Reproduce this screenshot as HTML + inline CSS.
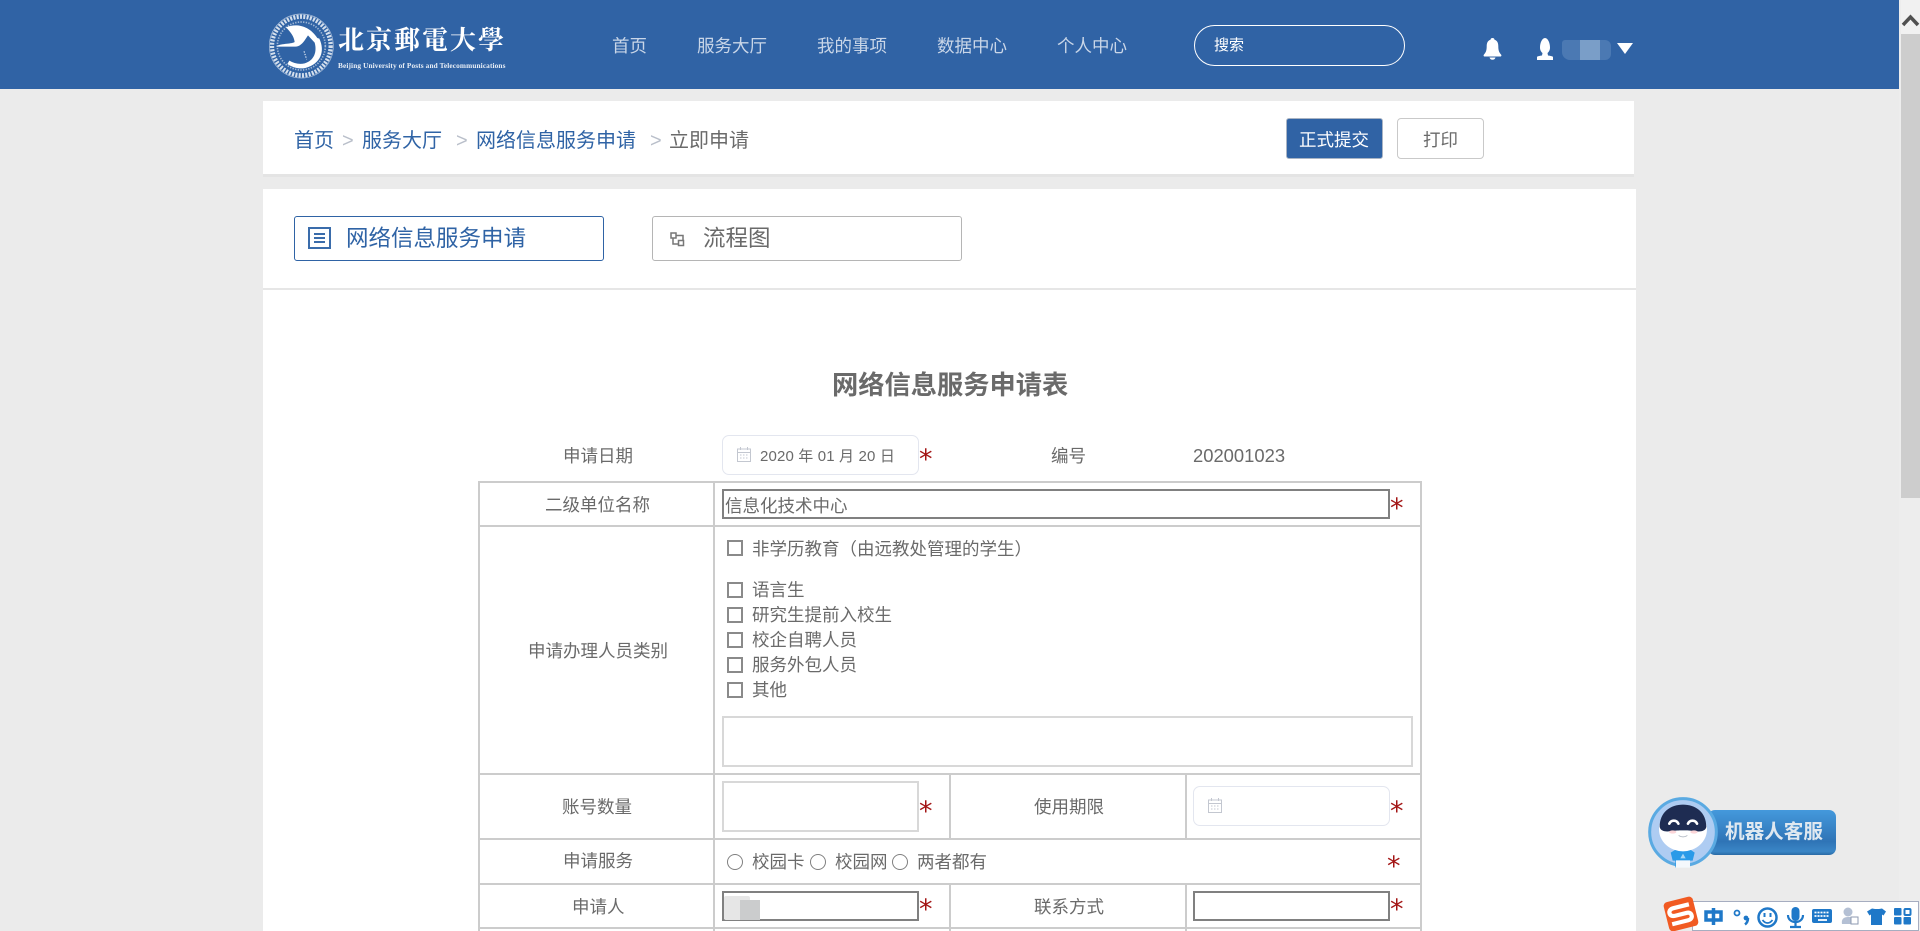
<!DOCTYPE html>
<html lang="zh-CN"><head><meta charset="utf-8"><title>网络信息服务申请</title>
<style>
html,body{margin:0;padding:0;width:1920px;height:931px;overflow:hidden;background:#ebebeb}
body{position:relative;font-family:"Liberation Sans","Noto Sans CJK SC",sans-serif;color:#6a6a6a;font-size:17.5px}
div,span.t{position:absolute;box-sizing:border-box}
.t{white-space:nowrap;line-height:24px;height:24px}
.a{position:absolute;font-family:"DejaVu Sans",sans-serif;color:#a31515;font-size:27px;line-height:30px;height:30px;width:16px}
.nav{color:#c9d6e8;top:34px}
.b{color:#2f63a5;font-size:20px;top:129px}
.g{color:#b9bfca;font-size:20px;top:129px;font-family:"Liberation Sans",sans-serif}
.h{background:#ccc}
.cb{width:16px;height:16px;border:2px solid #8a8a8a;background:#fff;left:727px}
.rd{width:16px;height:16px;border:1.5px solid #808080;border-radius:50%;background:#fff}
.in{border:2px solid #808080;background:#fff}
.in2{border:2px solid #d8d8d8;background:#fff}
.dt{border:1.5px solid #e3e6ef;border-radius:7px;background:#fff}
svg{position:absolute;overflow:visible}
</style></head><body>
<div style="left:0;top:0;width:1899px;height:89px;background:#3063a5"></div>
<!-- scrollbar -->
<div style="left:1899px;top:0;width:21px;height:931px;background:#ededed"></div>
<div style="left:1901px;top:0;width:19px;height:34px;background:#f1f1f1"></div>
<div style="left:1901px;top:34px;width:19px;height:464px;background:#cdcdcd"></div>
<svg style="left:1901px;top:12px" width="19" height="18"><path d="M2 13 L9.500 5 L17 13" fill="none" stroke="#505050" stroke-width="3.500"/></svg>

<!-- logo -->
<svg style="left:262px;top:8px" width="80" height="76" viewBox="0 0 240 228">
<circle cx="118" cy="114" r="88" fill="none" stroke="#fff" stroke-width="13" stroke-dasharray="6 4" opacity=".8"/>
<circle cx="118" cy="114" r="72" fill="none" stroke="#fff" stroke-width="5" stroke-dasharray="4 4" opacity=".55"/>
<circle cx="118" cy="114" r="96" fill="none" stroke="#fff" stroke-width="2" opacity=".6"/>
<path d="M44 114 C60 106 90 108 98 102 C96 85 86 72 72 58 C100 46 140 50 166 90 L172 92 C190 130 176 168 130 180 C112 184 90 178 76 168 L82 158 C96 166 112 170 128 166 C156 158 166 132 158 104 L138 82 L130 94 C122 106 112 116 100 116 L44 116 Z" fill="#fff"/>
<path d="M126 130l8 24" stroke="#fff" stroke-width="3" stroke-dasharray="4 4"/>
</svg>
<span class="t" style="left:338px;top:21px;height:36px;line-height:36px;font-family:'Noto Serif CJK SC',serif;font-weight:700;font-size:26px;color:#fff;letter-spacing:2px">北京郵電大學</span>
<span class="t" style="left:338px;top:60px;height:12px;line-height:12px;font-family:'Liberation Serif',serif;font-size:7.3px;font-weight:bold;color:#e8eef6;letter-spacing:.12px">Beijing University of Posts and Telecommunications</span>

<span class="t nav" style="left:612px">首页</span>
<span class="t nav" style="left:697px">服务大厅</span>
<span class="t nav" style="left:817px">我的事项</span>
<span class="t nav" style="left:937px">数据中心</span>
<span class="t nav" style="left:1057px">个人中心</span>

<div style="left:1194px;top:25px;width:211px;height:41px;border:1.5px solid #fff;border-radius:21px"></div>
<span class="t" style="left:1214px;top:34px;color:#fff;font-size:15px">搜索</span>
<svg style="left:1482px;top:38px" width="21" height="22" viewBox="0 0 21 22"><path d="M10.500 0c1.300 0 2 .8 2 1.800 3 .9 3.800 3.500 3.800 6.500 0 4 .7 6 2.700 8.200.8.900.4 2-.8 2H2.800c-1.200 0-1.600-1.100-.8-2 2-2.200 2.700-4.200 2.700-8.200 0-3 .8-5.600 3.800-6.500 0-1 .7-1.800 2-1.800z" fill="#fff"/><path d="M7.500 19.500h6c-.5 1.500-1.500 2.300-3 2.300s-2.500-.8-3-2.300z" fill="#fff"/></svg>
<svg style="left:1536px;top:38px" width="18" height="22" viewBox="0 0 18 22"><path d="M9 0c3 0 5 5 5 9.500 0 2.700-1.200 4.500-2.500 5.500l.5 2.500c2.500.4 5 .8 5 1.500V22H1v-3c0-.7 2.500-1.100 5-1.500l.5-2.500C5.200 14 4 12.200 4 9.500 4 5 6 0 9 0z" fill="#fff"/></svg>
<div style="left:1562px;top:40px;width:49px;height:20px;background:#4b79b3;border-radius:3px 6px 6px 8px"></div>
<div style="left:1580px;top:40px;width:20px;height:20px;background:#7a9ec8"></div>
<svg style="left:1617px;top:43px" width="16" height="11"><path d="M0 0H16L8 11Z" fill="#fff"/></svg>

<!-- breadcrumb panel -->
<div style="left:263px;top:101px;width:1371px;height:73px;background:#fff;box-shadow:0 3px 0 #e4e4e4"></div>
<span class="t b" style="left:294px">首页</span>
<span class="t g" style="left:342px">&gt;</span>
<span class="t b" style="left:362px">服务大厅</span>
<span class="t g" style="left:456px">&gt;</span>
<span class="t b" style="left:476px">网络信息服务申请</span>
<span class="t g" style="left:650px">&gt;</span>
<span class="t" style="left:669px;top:129px;font-size:20px">立即申请</span>
<div style="left:1286px;top:118px;width:97px;height:41px;background:#3063a5;border:1.5px solid #a9b4c4;border-radius:3px"></div>
<span class="t" style="left:1299px;top:128px;color:#fff">正式提交</span>
<div style="left:1397px;top:118px;width:87px;height:41px;background:#fff;border:1.5px solid #c9c9c9;border-radius:4px"></div>
<span class="t" style="left:1423px;top:128px">打印</span>

<!-- main panel -->
<div style="left:263px;top:189px;width:1373px;height:742px;background:#fff"></div>
<div style="left:263px;top:288px;width:1373px;height:2px;background:#e6e6e6"></div>
<div style="left:294px;top:216px;width:310px;height:45px;border:1.5px solid #2f63a5;border-radius:3px"></div>
<svg style="left:308px;top:227px" width="23" height="22"><rect x="1" y="1" width="21" height="20" fill="none" stroke="#3a6cab" stroke-width="2"/><path d="M6 7h11M6 11h11M6 15h11" stroke="#3a6cab" stroke-width="2"/></svg>
<span class="t" style="left:346px;top:227px;font-size:22.500px;color:#2f63a5">网络信息服务申请</span>
<div style="left:652px;top:216px;width:310px;height:45px;border:1.5px solid #b5b5b5;border-radius:3px"></div>
<svg style="left:670px;top:232px" width="15" height="15" fill="none" stroke="#777" stroke-width="1.500"><rect x="1" y="1" width="5" height="5"/><rect x="8.500" y="8.500" width="5" height="5"/><path d="M6 3.500h7v5M8.500 12H3V6"/></svg>
<span class="t" style="left:703px;top:227px;font-size:22.500px">流程图</span>

<span class="t" style="left:832px;top:369px;height:32px;line-height:32px;font-size:26.250px;font-weight:bold">网络信息服务申请表</span>

<span class="t" style="left:563px;top:444px">申请日期</span>
<div class="dt" style="left:722px;top:435px;width:197px;height:40px"></div>
<svg style="left:737px;top:447px" width="14" height="15" fill="none" stroke="#c3c7d0" stroke-width="1"><rect x=".5" y="2" width="13" height="12.500"/><path d="M.5 5.500h13M3.500 0v3M10.500 0v3"/><path d="M3 8h8M3 11h8" stroke-dasharray="1.500 1.500"/></svg>
<span class="t" style="left:760px;top:445px;font-size:15px;letter-spacing:.15px">2020 年 01 月 20 日</span>
<span class="a" style="left:919px;top:445px">*</span>
<span class="t" style="left:1051px;top:444px">编号</span>
<span class="t" style="left:1193px;top:444px;font-size:18.400px">202001023</span>

<!-- table lines -->
<div class="h" style="left:478px;top:481px;width:943px;height:2px"></div>
<div class="h" style="left:478px;top:525px;width:943px;height:2px"></div>
<div class="h" style="left:478px;top:773px;width:943px;height:2px"></div>
<div class="h" style="left:478px;top:838px;width:943px;height:2px"></div>
<div class="h" style="left:478px;top:883px;width:943px;height:2px"></div>
<div class="h" style="left:478px;top:927px;width:943px;height:2px"></div>
<div class="h" style="left:478px;top:481px;width:2px;height:450px"></div>
<div class="h" style="left:713px;top:481px;width:2px;height:450px"></div>
<div class="h" style="left:1420px;top:481px;width:2px;height:450px"></div>
<div class="h" style="left:949px;top:773px;width:2px;height:65px"></div>
<div class="h" style="left:1185px;top:773px;width:2px;height:65px"></div>
<div class="h" style="left:949px;top:883px;width:2px;height:48px"></div>
<div class="h" style="left:1185px;top:883px;width:2px;height:48px"></div>

<span class="t" style="left:545px;top:493px">二级单位名称</span>
<div class="in" style="left:722px;top:489px;width:668px;height:30px"></div>
<span class="t" style="left:725px;top:494px">信息化技术中心</span>
<span class="a" style="left:1390px;top:494px">*</span>

<span class="t" style="left:528px;top:639px">申请办理人员类别</span>
<div class="cb" style="top:540px"></div><span class="t" style="left:752px;top:537px">非学历教育（由远教处管理的学生）</span>
<div class="cb" style="top:582px"></div><span class="t" style="left:752px;top:578px">语言生</span>
<div class="cb" style="top:607px"></div><span class="t" style="left:752px;top:603px">研究生提前入校生</span>
<div class="cb" style="top:632px"></div><span class="t" style="left:752px;top:628px">校企自聘人员</span>
<div class="cb" style="top:657px"></div><span class="t" style="left:752px;top:653px">服务外包人员</span>
<div class="cb" style="top:682px"></div><span class="t" style="left:752px;top:678px">其他</span>
<div class="in2" style="left:722px;top:716px;width:691px;height:51px"></div>

<span class="t" style="left:562px;top:795px">账号数量</span>
<div class="in2" style="left:722px;top:781px;width:197px;height:51px"></div>
<span class="a" style="left:919px;top:797px">*</span>
<span class="t" style="left:1034px;top:795px">使用期限</span>
<div class="dt" style="left:1193px;top:786px;width:197px;height:40px"></div>
<svg style="left:1208px;top:798px" width="14" height="15" fill="none" stroke="#c3c7d0" stroke-width="1"><rect x=".5" y="2" width="13" height="12.500"/><path d="M.5 5.500h13M3.500 0v3M10.500 0v3"/><path d="M3 8h8M3 11h8" stroke-dasharray="1.500 1.500"/></svg>
<span class="a" style="left:1390px;top:797px">*</span>

<span class="t" style="left:563px;top:849px">申请服务</span>
<div class="rd" style="left:727px;top:854px"></div><span class="t" style="left:752px;top:850px">校园卡</span>
<div class="rd" style="left:810px;top:854px"></div><span class="t" style="left:835px;top:850px">校园网</span>
<div class="rd" style="left:892px;top:854px"></div><span class="t" style="left:917px;top:850px">两者都有</span>
<span class="a" style="left:1387px;top:852px">*</span>

<span class="t" style="left:572px;top:895px">申请人</span>
<div class="in" style="left:722px;top:891px;width:197px;height:30px"></div>
<div style="left:724px;top:896px;width:26px;height:24px;background:#e6e6e6;border-radius:2px"></div>
<div style="left:740px;top:900px;width:20px;height:20px;background:#cbcccd"></div>
<span class="a" style="left:919px;top:895px">*</span>
<span class="t" style="left:1034px;top:895px">联系方式</span>
<div class="in" style="left:1193px;top:891px;width:197px;height:30px"></div>
<span class="a" style="left:1390px;top:895px">*</span>

<!-- robot -->
<div style="left:1708px;top:810px;width:128px;height:45px;border-radius:7px;background:linear-gradient(#4499dc,#2f74b6 70%,#3a86c6 92%,#2a6aa5);"></div>
<span class="t" style="left:1725px;top:820px;color:#dfe8f0;font-size:19.600px;font-weight:bold">机器人客服</span>
<svg style="left:1644px;top:792px" width="80" height="80" viewBox="0 0 240 240">
<circle cx="117" cy="120" r="100" fill="#aeccf2" stroke="#5aaae2" stroke-width="9"/>
<path d="M96 172h42l14 10-6 24h-8v20h-44v-20h-8l-6-24z" fill="#2a9ae8"/><rect x="96" y="205" width="42" height="22" fill="#f4f8fc"/>
<path d="M117 185l8 14h-16z" fill="#a9d6f5"/>
<ellipse cx="117" cy="112" rx="72" ry="66" fill="#fff"/>
<path d="M47 105C47 60 80 38 117 38s70 22 70 67c-4 16-24 14-38 12-16-2-22-2-32-2s-16 0-32 2c-14 2-34 4-38-12z" fill="#1e2c52"/>
<path d="M76 95c5-12 22-12 27 0M132 95c5-12 22-12 27 0" fill="none" stroke="#fff" stroke-width="8" stroke-linecap="round"/>
<ellipse cx="86" cy="120" rx="11" ry="5" fill="#fbd5d8"/><ellipse cx="150" cy="120" rx="11" ry="5" fill="#fbd5d8"/>
<path d="M104 130c6 6 20 6 26 0" fill="none" stroke="#b8bfc8" stroke-width="3"/>
</svg>

<!-- IME bar -->
<div style="left:1692px;top:901px;width:227px;height:30px;background:#fff;border:1.5px solid #a6adc0"></div>
<svg style="left:1660px;top:895px" width="260" height="36" viewBox="0 0 260 36">
<g transform="rotate(-14 21 19)"><rect x="6" y="4" width="30" height="30" rx="4" fill="#f15a22"/>
<path d="M31 11.500H15c-3.500 0-5 2-5 4 0 2.500 1.800 3.800 5 3.800h12c2.800 0 4 1.700 4 3.700 0 2.300-1.800 3.800-4.500 3.800H10" fill="none" stroke="#fff" stroke-width="4.200"/></g>
<path d="M46 17h15v8H46zM53.500 13v17" fill="none" stroke="#1f78c8" stroke-width="3.500"/>
<circle cx="77" cy="18" r="2.500" fill="none" stroke="#1f78c8" stroke-width="1.800"/><circle cx="86" cy="23" r="2.400" fill="#1f78c8"/><path d="M88 23c0 3-1 5-3 6.500" fill="none" stroke="#1f78c8" stroke-width="2.500"/>
<circle cx="107.500" cy="22.500" r="9" fill="none" stroke="#1f78c8" stroke-width="2.500"/><path d="M104.500 18v4M110.500 18v4" stroke="#1f78c8" stroke-width="2"/><path d="M102.500 25c3 4 7 4 10 0" fill="none" stroke="#1f78c8" stroke-width="1.800"/>
<rect x="131.500" y="12" width="8" height="14" rx="4" fill="#1f78c8"/><path d="M128 20c0 9.500 15 9.500 15 0M135.500 27v4M130 32h11" fill="none" stroke="#1f78c8" stroke-width="2.200"/>
<rect x="152" y="14" width="20" height="14" rx="2" fill="#1f78c8"/><path d="M154.500 17.500h15M154.500 21h15" stroke="#fff" stroke-width="1.800" stroke-dasharray="2 1"/><path d="M158 25h9" stroke="#fff" stroke-width="1.800"/>
<circle cx="188" cy="17" r="4.500" fill="#b4c0d4"/><path d="M182 29c-1-5 2-7 6-7s5 1 6 2v5z" fill="#b4c0d4"/><rect x="191" y="22" width="7" height="7" fill="#fff" stroke="#8e9ab0"/>
<path d="M212 13.500l3 .5h4l3-.5 4 3-2.500 4-1.500-1V30h-11V19.500l-1.500 1-2.500-4z" fill="#1f78c8"/>
<rect x="234" y="13" width="7.500" height="7.500" rx="1" fill="#1f78c8"/><rect x="244.500" y="14" width="6" height="6" rx="1" fill="none" stroke="#1f78c8" stroke-width="2"/><rect x="234" y="22" width="7.500" height="7.500" rx="1" fill="#1f78c8"/><rect x="243.500" y="22" width="7.500" height="7.500" rx="1" fill="#1f78c8"/>
</svg>
</body></html>
